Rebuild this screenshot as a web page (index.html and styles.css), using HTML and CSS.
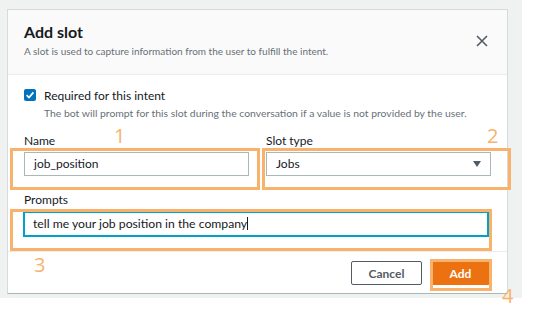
FILE: index.html
```html
<!DOCTYPE html>
<html lang="en">
<head>
<meta charset="utf-8">
<title>Add slot</title>
<link rel="stylesheet" href="styles.css">
</head>
<body>
<div class="page">
  <div class="backdrop">
    <div class="modal">
      <header class="modal-header">
        <div class="heading">
          <h2 class="title">Add slot</h2>
          <p class="subtitle">A slot is used to capture information from the user to fulfill the intent.</p>
        </div>
        <button class="close" aria-label="Close">
          <svg width="12" height="12" viewBox="0 0 12 12"><path d="M1 1 L11 11 M11 1 L1 11" stroke="#545b64" stroke-width="1.6" fill="none"/></svg>
        </button>
      </header>
      <div class="modal-body">
        <div class="check-row">
          <span class="checkbox">
            <svg width="12" height="12" viewBox="0 0 12 12"><path d="M2.6 6.2 L5 8.6 L9.4 3.4" stroke="#fff" stroke-width="1.7" fill="none"/></svg>
          </span>
          <div class="check-text">
            <div class="check-title">Required for this intent</div>
            <div class="check-help">The bot will prompt for this slot during the conversation if a value is not provided by the user.</div>
          </div>
        </div>
        <div class="fields">
          <div class="field">
            <div class="label">Name</div>
            <div class="input">job_position</div>
          </div>
          <div class="field">
            <div class="label">Slot type</div>
            <div class="input select">Jobs<span class="caret"></span></div>
          </div>
        </div>
        <div class="field prompts">
          <div class="label">Prompts</div>
          <div class="input focused">tell me your job position in the company<span class="cursor"></span></div>
        </div>
      </div>
      <footer class="modal-footer">
        <button class="btn btn-cancel">Cancel</button>
        <button class="btn btn-add">Add</button>
      </footer>
    </div>
  </div>
  <div class="mark mark-1"></div>
  <div class="mark mark-2"></div>
  <div class="mark mark-3"></div>
  <div class="mark mark-4"></div>
  <span class="num num-1">1</span>
  <span class="num num-2">2</span>
  <span class="num num-3">3</span>
  <span class="num num-4">4</span>
</div>
</body>
</html>
```

FILE: styles.css
```css
* { box-sizing: border-box; }
html, body { margin: 0; padding: 0; background: #fff; }
body { font-family: Lato, "Liberation Sans", sans-serif; color: #16191f; }

.page { position: relative; width: 540px; height: 310px; }

.backdrop {
  width: 522px;
  height: 298px;
  background: #f0f1f1;
  padding: 9px 0 0 7px;
}

.modal {
  width: 501px;
  height: 285px;
  background: #fff;
  border: 1px solid #d5dbdb;
  border-bottom-color: #aab7b8;
  display: flex;
  flex-direction: column;
}

.modal-header {
  height: 65px;
  background: #fafafa;
  border-bottom: 1px solid #eaeded;
  padding: 11px 16px 0 16px;
  display: flex;
  justify-content: space-between;
  align-items: flex-start;
}
.title { margin: 0; font-size: 16px; line-height: 22px; font-weight: 700; color: #16191f; }
.subtitle { margin: 1px 0 0; font-size: 10px; line-height: 14px; color: #687078; }

.close {
  border: 0; background: none; padding: 0; margin-top: 13px; margin-right: 2px;
  width: 14px; height: 14px; display: flex; align-items: center; justify-content: center;
}

.modal-body { padding: 14px 16px 0 16px; flex: 1; }

.check-row { display: flex; gap: 8px; }
.checkbox {
  width: 12px; height: 12px; margin-top: 0; border-radius: 2px;
  background: #0073bb; display: flex; flex: none;
}
.check-title { font-size: 12px; line-height: 14px; margin-top: 0; }
.check-help { font-size: 10.4px; line-height: 14px; color: #687078; margin-top: 3px; }

.fields { display: grid; grid-template-columns: 1fr 1fr; gap: 17px; margin-top: 13px; }
.label { font-size: 12px; line-height: 16px; color: #16191f; margin-bottom: 3px; }

.input {
  height: 24px;
  border: 1px solid #aab7b8;
  padding: 0 9px;
  font-size: 12px;
  line-height: 22px;
  color: #16191f;
  background: #fff;
}
.select { display: flex; justify-content: space-between; align-items: center; }
.caret {
  width: 0; height: 0; margin-right: 0;
  border-left: 4px solid transparent; border-right: 4px solid transparent;
  border-top: 6px solid #545b64;
}

.prompts { margin-top: 16px; }
.prompts .label { margin-bottom: 3px; }
.focused {
  height: 26px;
  border: 2px solid #00a1c9;
  padding: 0 8px;
  margin-left: -1px;
  margin-right: 2px;
  font-size: 12.2px;
}
.cursor { display: inline-block; width: 1px; height: 13px; background: #16191f; vertical-align: -2px; }

.modal-footer {
  border-top: 1px solid #eaeded;
  padding: 9px 17px 8px 16px;
  display: flex;
  justify-content: flex-end;
  gap: 9px;
}
.btn {
  height: 24px;
  font-family: inherit;
  font-size: 12px;
  font-weight: 700;
  border-radius: 2px;
  padding: 0;
}
.btn-cancel { width: 71px; background: #fff; border: 1px solid #545b64; color: #545b64; }
.btn-add { width: 59px; background: #ec7211; border: 1px solid #ec7211; color: #fff; }

.mark { position: absolute; border: 3px solid #f9b26b; }
.mark-1 { left: 10px; top: 148px; width: 250px; height: 42px; }
.mark-2 { left: 262px; top: 148px; width: 249px; height: 42px; }
.mark-3 { left: 10px; top: 209px; width: 482px; height: 42px; }
.mark-4 { left: 430px; top: 259px; width: 62px; height: 32px; }

.num {
  position: absolute;
  font-family: "Open Sans", sans-serif;
  font-size: 20px;
  line-height: 20px;
  color: #f9b26b;
}
.num-1 { left: 114px; top: 126px; }
.num-2 { left: 487px; top: 126px; }
.num-3 { left: 34px; top: 255px; }
.num-4 { left: 502px; top: 286px; }
```
